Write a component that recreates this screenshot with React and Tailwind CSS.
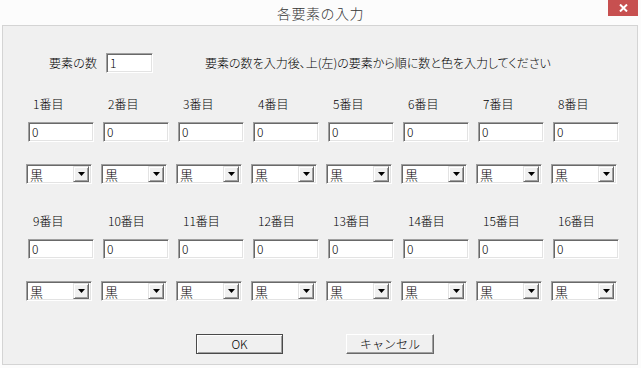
import React from "react";

const font = "font-['Noto_Sans_CJK_JP','Noto_Sans',sans-serif]";

const sunken =
    "border border-t-[#a0a0a0] border-l-[#a0a0a0] border-b-white border-r-white shadow-[inset_1px_1px_0_#696969,inset_-1px_-1px_0_#e3e3e3] bg-white";

const TextBox = ({ value, className }) => (
    <div className={`${sunken} h-[20px] flex items-center pl-[3px] text-[12px] leading-none ${className}`}>
        {value}
    </div>
);

const Combo = () => (
    <div className={`${sunken} h-[20px] w-[66px] flex items-center p-[2px]`}>
        <span className="flex-1 pl-[1px] text-[13px] leading-none">黒</span>
        <div className="w-[16px] h-[16px] bg-[#f0f0f0] border border-t-[#e3e3e3] border-l-[#e3e3e3] border-b-[#696969] border-r-[#696969] shadow-[inset_1px_1px_0_#ffffff,inset_-1px_-1px_0_#a0a0a0] flex items-center justify-center">
            <svg width="7" height="4" viewBox="0 0 7 4">
                <polygon points="0,0 7,0 3.5,4" fill="#000" />
            </svg>
        </div>
    </div>
);

const Block = ({ start }) => (
    <div className="grid grid-cols-[repeat(8,75px)] pl-[23px]">
        {Array.from({ length: 8 }, (_, i) => (
            <div key={i} className="flex flex-col">
                <div className="h-[16px] pl-[7px] text-[12px] leading-[16px]">{start + i}番目</div>
                <TextBox value="0" className="mt-[10px] ml-[2px] w-[66px]" />
                <div className="mt-[22px]">
                    <Combo />
                </div>
            </div>
        ))}
    </div>
);

const App = () => {
    return (
        <div className={`w-[641px] h-[368px] bg-[#fcfcfc] text-black font-light ${font}`}>
            {/* title bar */}
            <div className="relative h-[25px] flex items-center justify-center">
                <span className="text-[14px] leading-none text-[#333333] tracking-[0.5px]">各要素の入力</span>
                <div className="absolute right-[3px] top-0 w-[30px] h-[16px] bg-[#c75050] flex items-center justify-center">
                    <svg width="9" height="8" viewBox="0 0 9 8">
                        <path d="M1 0.5 L8 7.5 M8 0.5 L1 7.5" stroke="#fff" strokeWidth="2" />
                    </svg>
                </div>
            </div>

            {/* client area */}
            <div className="ml-[2px] w-[636px] h-[340px] border border-[#d4d4d4] bg-[#f0f0f0]">
                <div className="mt-[27px] h-[20px] flex items-center pl-[46px]">
                    <span className="text-[12px] leading-none">要素の数</span>
                    <TextBox value="1" className="ml-[9px] w-[47px]" />
                    <span className="ml-[52px] text-[12px] leading-none [font-feature-settings:'palt']">
                        要素の数を入力後、上(左)の要素から順に数と色を入力してください
                    </span>
                </div>

                <div className="mt-[23px]">
                    <Block start={1} />
                </div>
                <div className="mt-[29px]">
                    <Block start={9} />
                </div>

                <div className="mt-[33px] flex pl-[193px]">
                    <button className="w-[87px] h-[20px] bg-[#f0f0f0] border border-[#4a4a4a] shadow-[inset_1px_1px_0_#ffffff,inset_-1px_-1px_0_#a0a0a0] text-[12px] leading-none">
                        OK
                    </button>
                    <button className="ml-[63px] w-[88px] h-[20px] bg-[#f0f0f0] border border-t-white border-l-white border-b-[#696969] border-r-[#696969] shadow-[inset_-1px_-1px_0_#a0a0a0] text-[12px] leading-none">
                        キャンセル
                    </button>
                </div>
            </div>
        </div>
    );
};

export default App;
